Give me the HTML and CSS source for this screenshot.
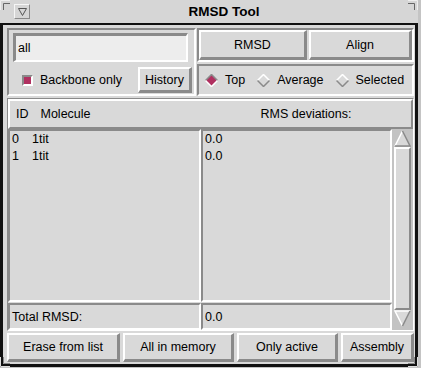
FILE: index.html
```html
<!DOCTYPE html>
<html lang="en">
<head>
    <meta charset="UTF-8">
    <title>RMSD Tool</title>
    <link rel="stylesheet" href="styles.css">
</head>
<body>
<div class="window">
    <!-- title bar -->
    <div class="titlebar">
        <span class="menu-btn">
            <svg width="9" height="8" viewBox="0 0 9 8"><polygon points="0.5,0.5 8.5,0.5 4.5,7.5" fill="none" stroke="#555" stroke-width="1"/></svg>
        </span>
        <span class="title">RMSD Tool</span>
    </div>

    <div class="client">
        <div class="top">
            <!-- selection -->
            <div class="frame sel-frame">
                <input class="entry" type="text" value="all">
                <div class="sel-row">
                    <span class="check"><span class="check-box"></span>Backbone only</span>
                    <button class="btn btn-history">History</button>
                </div>
            </div>

            <div class="right-col">
                <div class="frame btn-frame">
                    <button class="btn btn-rmsd">RMSD</button>
                    <button class="btn btn-align">Align</button>
                </div>
                <div class="frame radio-frame">
                    <span class="radio">
                        <svg width="13" height="13" viewBox="0 0 13 13">
                            <polygon points="6.5,0.5 12.5,6.5 6.5,12.5 0.5,6.5" fill="#b03060"/>
                            <polyline points="0.5,6.5 6.5,0.5 12.5,6.5" fill="none" stroke="#8a8a8a" stroke-width="1.5"/>
                            <polyline points="0.5,6.5 6.5,12.5 12.5,6.5" fill="none" stroke="#fff" stroke-width="1.5"/>
                        </svg>Top</span>
                    <span class="radio">
                        <svg width="13" height="13" viewBox="0 0 13 13">
                            <polygon points="6.5,0.5 12.5,6.5 6.5,12.5 0.5,6.5" fill="#d9d9d9"/>
                            <polyline points="0.5,6.5 6.5,0.5 12.5,6.5" fill="none" stroke="#fff" stroke-width="1.5"/>
                            <polyline points="0.5,6.5 6.5,12.5 12.5,6.5" fill="none" stroke="#8a8a8a" stroke-width="1.5"/>
                        </svg>Average</span>
                    <span class="radio">
                        <svg width="13" height="13" viewBox="0 0 13 13">
                            <polygon points="6.5,0.5 12.5,6.5 6.5,12.5 0.5,6.5" fill="#d9d9d9"/>
                            <polyline points="0.5,6.5 6.5,0.5 12.5,6.5" fill="none" stroke="#fff" stroke-width="1.5"/>
                            <polyline points="0.5,6.5 6.5,12.5 12.5,6.5" fill="none" stroke="#8a8a8a" stroke-width="1.5"/>
                        </svg>Selected</span>
                </div>
            </div>
        </div>

        <!-- results table -->
        <div class="table">
            <div class="header">
                <span class="h-left"><span>ID</span><span>Molecule</span></span>
                <span class="h-right">RMS deviations:</span>
            </div>
            <div class="list">
                <div class="row"><span class="col-id">0</span>1tit</div>
                <div class="row"><span class="col-id">1</span>1tit</div>
            </div>
            <div class="list">
                <div class="row">0.0</div>
                <div class="row">0.0</div>
            </div>
            <div class="scrollbar">
                <svg class="arrow" width="17" height="17" viewBox="0 0 17 17">
                    <polygon points="8.5,1 16,16 1,16" fill="#d9d9d9"/>
                    <polyline points="1,16 8.5,1" fill="none" stroke="#fff" stroke-width="1.5"/>
                    <polyline points="8.5,1 16,16 1,16" fill="none" stroke="#8a8a8a" stroke-width="1.5"/>
                </svg>
                <div class="slider"></div>
                <svg class="arrow" width="17" height="17" viewBox="0 0 17 17">
                    <polygon points="1,1 16,1 8.5,16" fill="#d9d9d9"/>
                    <polyline points="8.5,16 1,1 16,1" fill="none" stroke="#fff" stroke-width="1.5"/>
                    <polyline points="16,1 8.5,16" fill="none" stroke="#8a8a8a" stroke-width="1.5"/>
                </svg>
            </div>
            <div class="total">Total RMSD:</div>
            <div class="total">0.0</div>
        </div>

        <!-- bottom buttons -->
        <div class="bottom">
            <button class="btn btn-erase">Erase from list</button>
            <button class="btn btn-all">All in memory</button>
            <button class="btn btn-active">Only active</button>
            <button class="btn btn-assembly">Assembly</button>
        </div>
    </div>

    <!-- resize corners of the window frame -->
    <svg class="corner corner-tl" width="10" height="10" viewBox="0 0 10 10"><path d="M0.5,10 V0.5 H10" fill="none" stroke="#eee"/><path d="M3.5,10 V3.5 H10" fill="none" stroke="#666"/></svg>
    <svg class="corner corner-tr" width="10" height="10" viewBox="0 0 10 10"><path d="M9.5,10 V0.5 H0" fill="none" stroke="#eee"/><path d="M6.5,10 V3.5 H0" fill="none" stroke="#666"/></svg>
    <svg class="corner corner-bl" width="10" height="10" viewBox="0 0 10 10"><path d="M0.5,0 V9.5 H10" fill="none" stroke="#ddd"/><path d="M3.5,0 V6.5 H10" fill="none" stroke="#888"/></svg>
    <svg class="corner corner-br" width="10" height="10" viewBox="0 0 10 10"><path d="M9.5,0 V9.5 H0" fill="none" stroke="#ddd"/><path d="M6.5,0 V6.5 H0" fill="none" stroke="#888"/></svg>
</div>
</body>
</html>
```

FILE: styles.css
```css
* {
    box-sizing: border-box;
}
body {
    margin: 0;
    background-color: #c4c4c4;
    font-family: "Liberation Sans", Arial, sans-serif;
    font-size: 12.5px;
    color: #000;
}
.window {
    position: relative;
    width: 418px;
    height: 367px;
    display: flex;
    flex-direction: column;
}

/* title bar */
.titlebar {
    height: 23px;
    flex: none;
    background-color: #d6d6d6;
    display: flex;
    align-items: center;
}
.menu-btn {
    width: 16px;
    height: 15px;
    margin-left: 14px;
    border: 1px solid;
    border-color: #f6f6f6 #8a8a8a #8a8a8a #f6f6f6;
    display: flex;
    align-items: center;
    justify-content: center;
}
.title {
    flex: 1;
    text-align: center;
    font-weight: bold;
    font-size: 13.5px;
}

/* client area */
.client {
    flex: 1;
    background-color: #d9d9d9;
    border: solid #111;
    border-width: 2px 3px 3px 3px;
    padding: 3px 1px 2px 4px;
    display: flex;
    flex-direction: column;
    gap: 2px;
}
.top {
    height: 68px;
    display: flex;
    gap: 1px;
}
.frame {
    border: 2px solid;
    border-color: #8a8a8a #fff #fff #8a8a8a;
}
.sel-frame {
    width: 189px;
    padding: 3px 0 0 4px;
}
.entry {
    display: block;
    width: 175px;
    height: 29px;
    margin: 0;
    padding: 0 0 0 2px;
    background-color: #ededed;
    border: solid;
    border-width: 3px 2px 2px 3px;
    border-color: #8a8a8a #fff #fff #8a8a8a;
    font: inherit;
    color: #000;
    outline: none;
}
.sel-row {
    display: flex;
    align-items: center;
    margin-top: 5px;
}
.check {
    flex: 1;
    display: flex;
    align-items: center;
    gap: 7px;
    margin-left: 9px;
}
.check-box {
    width: 11px;
    height: 11px;
    background-color: #b03060;
    border: 2px solid;
    border-color: #8a8a8a #fff #fff #8a8a8a;
}

.btn {
    font: inherit;
    color: #000;
    background-color: #d9d9d9;
    border: solid;
    border-width: 2px 3px 3px 2px;
    border-color: #fff #8a8a8a #8a8a8a #fff;
    padding: 0;
    margin: 0;
}
.btn-history {
    width: 54px;
    height: 26px;
    margin-right: 2px;
}

.right-col {
    flex: 1;
    display: flex;
    flex-direction: column;
    gap: 2px;
}
.btn-frame {
    height: 34px;
    display: flex;
    gap: 2px;
}
.btn-rmsd {
    width: 108px;
}
.btn-align {
    flex: 1;
}
.radio-frame {
    flex: 1;
    display: flex;
    align-items: center;
    padding-left: 6px;
    gap: 12px;
}
.radio {
    display: flex;
    align-items: center;
    gap: 7px;
}

/* table */
.table {
    flex: 1;
    border: 1px solid;
    border-color: #8a8a8a #fff #fff #8a8a8a;
    display: grid;
    grid-template-columns: 193px 191px 1fr;
    grid-template-rows: 30px 1fr 28px;
}
.header {
    grid-column: 1 / 4;
    display: flex;
    align-items: center;
    border: 2px solid;
    border-color: #fff #8a8a8a #8a8a8a #fff;
}
.h-left {
    width: 191px;
    padding-left: 6px;
    display: flex;
    gap: 12px;
}
.h-right {
    flex: 1;
    text-align: center;
}
.list {
    border: 2px solid;
    border-color: #8a8a8a #fff #fff #8a8a8a;
    padding: 0 2px;
    line-height: 17px;
}
.col-id {
    display: inline-block;
    width: 20px;
}
.scrollbar {
    grid-column: 3;
    grid-row: 2 / 4;
    background-color: #c3c3c3;
    padding: 1px 2px 3px 2px;
    display: flex;
    flex-direction: column;
}
.arrow {
    display: block;
}
.slider {
    flex: 1;
    background-color: #d9d9d9;
    border: 2px solid;
    border-color: #fff #8a8a8a #8a8a8a #fff;
}
.total {
    margin-top: 1px;
    border: 2px solid;
    border-color: #8a8a8a #fff #fff #8a8a8a;
    padding-left: 2px;
    display: flex;
    align-items: center;
}

/* bottom buttons */
.bottom {
    height: 29px;
    display: flex;
    gap: 3px;
}
.btn-erase {
    width: 113px;
}
.btn-all {
    width: 111px;
}
.btn-active {
    width: 101px;
}
.btn-assembly {
    flex: 1;
}

/* frame corners */
.corner {
    position: absolute;
}
.corner-tl {
    left: 0;
    top: 0;
}
.corner-tr {
    right: 0;
    top: 0;
}
.corner-bl {
    left: 0;
    bottom: 0;
}
.corner-br {
    right: 0;
    bottom: 0;
}
```
